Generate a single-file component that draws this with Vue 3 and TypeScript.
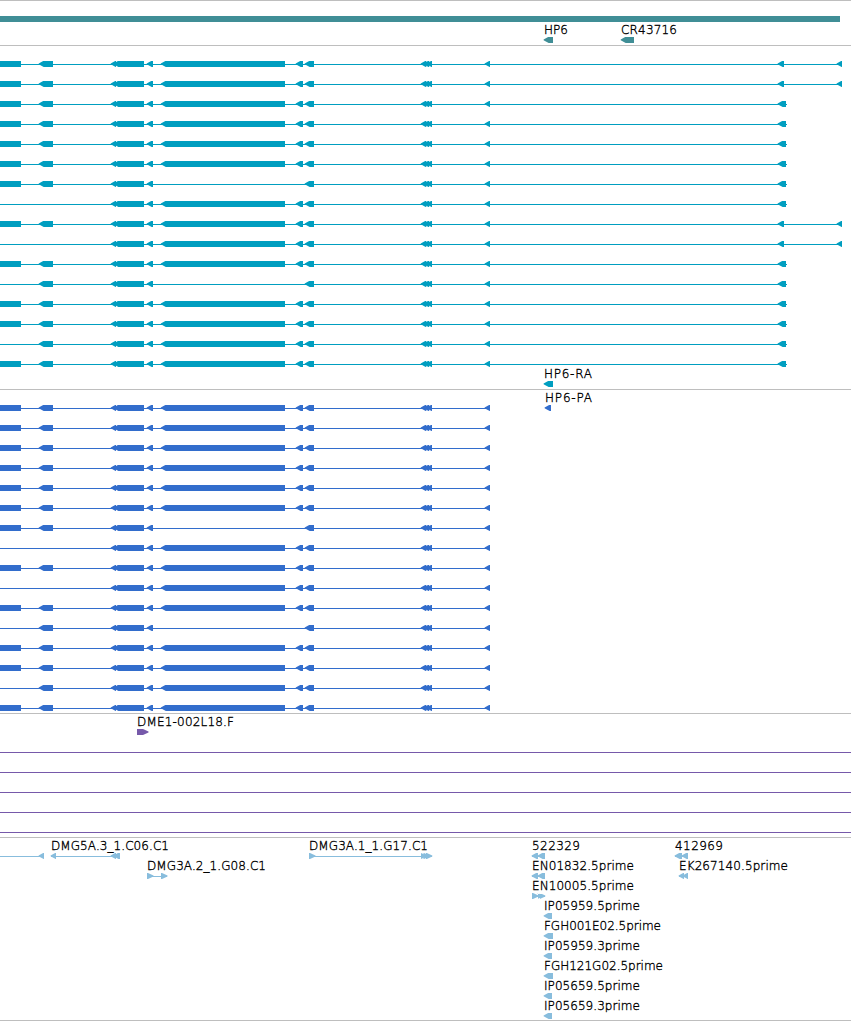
<script setup lang="ts">
type Direction = 'left' | 'right'

interface Block {
  start: number
  end: number
  dir?: Direction
}

interface Feature {
  y: number
  line?: [number, number]
  blocks: Block[]
}

interface Label {
  x: number
  y: number
  text: string
  width: number
}

interface Track {
  id: string
  height: number
  features: Feature[]
  labels: Label[]
}

const left = (start: number, end: number): Block => ({ start, end, dir: 'left' })
const right = (start: number, end: number): Block => ({ start, end, dir: 'right' })

// Outline of an exon; strand direction puts a pointed head on one side.
function outline(block: Block, y: number): string {
  const { start: a, end: b, dir } = block
  const head = Math.min(5, b - a)
  if (dir === 'left') return `M${a} ${y + 2.4}L${a + head - 0.5} ${y}H${b}V${y + 6}H${a + head}L${a} ${y + 3.2}Z`
  if (dir === 'right') return `M${a} ${y}H${b - head - 0.5}L${b} ${y + 2.6}V${y + 3.4}L${b - head - 0.5} ${y + 6}H${a}Z`
  return `M${a} ${y}H${b}V${y + 6}H${a}Z`
}

// Isoforms differ in which exons they keep: s = leading, b = second, e = long exon, p = far promoter.
const isoforms = ['sbep', 'sbep', 'sbe', 'sbe', 'sbe', 'sbe', 'sb', 'e', 'sbep', 'ep', 'sbe', 'b', 'sbe', 'sbe', 'be', 'sbe']

function isoformRows(top: number, coding: boolean): Feature[] {
  return isoforms.map((keys, i) => {
    const blocks: Block[] = []
    if (keys.includes('s')) blocks.push({ start: 0, end: 21 })
    if (keys.includes('b')) blocks.push(left(38.7, 53))
    blocks.push(left(110.7, 116), left(113.4, 144), left(146.7, 153))
    if (keys.includes('e')) blocks.push(left(160.8, 285), left(295.7, 303))
    blocks.push(left(304.7, 314), left(420.7, 426.3), left(423.5, 429.2), left(426.5, 432), left(484.6, 490))
    let end = 490
    if (!coding) {
      if (keys.includes('p')) {
        blocks.push(left(777.6, 784), left(836.6, 842))
        end = 842
      } else {
        blocks.push(left(777.6, 786))
        end = 787
      }
    }
    return { y: top + i * 20, line: [0, end], blocks }
  })
}

const label = (x: number, y: number, text: string, width: number): Label => ({ x, y, text, width })

const tracks: Track[] = [
  {
    id: 'gene',
    height: 45,
    features: [
      { y: 16, blocks: [{ start: 0, end: 840 }] },
      { y: 37, blocks: [left(543.6, 553), left(620.7, 634)] },
    ],
    labels: [label(544, 34, 'HP6', 24), label(621, 34, 'CR43716', 56)],
  },
  {
    id: 'transcript',
    height: 344,
    features: [...isoformRows(16, false), { y: 336, blocks: [left(543.6, 553)] }],
    labels: [label(544, 333, 'HP6-RA', 48)],
  },
  {
    id: 'protein',
    height: 324,
    features: [...isoformRows(16, true), { y: 16, blocks: [left(544.6, 551)] }],
    labels: [label(545, 13, 'HP6-PA', 47)],
  },
  {
    id: 'clone',
    height: 124,
    features: [
      { y: 16, blocks: [right(137, 148.5)] },
      ...[36, 56, 76, 96, 116].map((y): Feature => ({ y, line: [0, 851], blocks: [] })),
    ],
    labels: [label(137, 13, 'DME1-002L18.F', 97)],
  },
  {
    id: 'est',
    height: 183,
    features: [
      { y: 16, line: [0, 44], blocks: [left(38.6, 44)] },
      { y: 16, line: [51, 120], blocks: [left(50.6, 56), left(110.6, 116), left(113.4, 120)] },
      { y: 36, line: [147, 167], blocks: [right(147, 153.5), right(161, 167.5)] },
      { y: 16, line: [309, 432], blocks: [right(309, 315.5), right(421, 426.5), right(423.5, 429.5), right(426, 432.3)] },
      { y: 16, line: [532, 545], blocks: [left(531.6, 538), left(537.6, 545)] },
      { y: 36, line: [532, 545], blocks: [left(531.6, 538), left(537.6, 545)] },
      { y: 56, line: [532, 545], blocks: [right(532, 538.5), right(538, 543), right(540, 545.3)] },
      { y: 16, line: [675, 688], blocks: [left(674.6, 682), left(681.6, 688)] },
      { y: 36, line: [679, 688], blocks: [left(678.6, 684), left(682.6, 688)] },
      ...[552, 553, 552, 553, 552, 552].map((end, i): Feature => ({ y: 76 + i * 20, blocks: [left(543.6, end)] })),
    ],
    labels: [
      label(51, 13, 'DMG5A.3_1.C06.C1', 118),
      label(147, 33, 'DMG3A.2_1.G08.C1', 119),
      label(309, 13, 'DMG3A.1_1.G17.C1', 119),
      label(532, 13, '522329', 48),
      label(532, 33, 'EN01832.5prime', 102),
      label(532, 53, 'EN10005.5prime', 102),
      label(544, 73, 'IP05959.5prime', 96),
      label(544, 93, 'FGH001E02.5prime', 117),
      label(544, 113, 'IP05959.3prime', 96),
      label(544, 133, 'FGH121G02.5prime', 119),
      label(544, 153, 'IP05659.5prime', 96),
      label(544, 173, 'IP05659.3prime', 96),
      label(675, 13, '412969', 48),
      label(679, 33, 'EK267140.5prime', 109),
    ],
  },
]
</script>

<template>
  <main class="browser">
    <section v-for="track in tracks" :key="track.id" class="track" :class="track.id">
      <svg width="851" :height="track.height - 1" :viewBox="`0 1 851 ${track.height - 1}`">
        <g v-for="(feature, i) in track.features" :key="i">
          <rect
            v-if="feature.line"
            :x="feature.line[0]"
            :y="feature.y + 3"
            :width="feature.line[1] - feature.line[0]"
            height="1"
          />
          <path v-for="(block, j) in feature.blocks" :key="j" :d="outline(block, feature.y)" />
        </g>
        <text
          v-for="item in track.labels"
          :key="item.text"
          :x="item.x"
          :y="item.y"
          :textLength="item.width"
        >{{ item.text }}</text>
      </svg>
    </section>
  </main>
</template>

<style>
body {
  margin: 0;
  background: #fff;
}
</style>

<style scoped>
.browser {
  display: flex;
  flex-direction: column;
  width: 851px;
  height: 1021px;
  overflow: hidden;
  box-sizing: border-box;
  border-bottom: 1px solid #bebebe;
}

.track {
  flex: none;
  border-top: 1px solid #bebebe;
}

.track svg {
  display: block;
}

.gene {
  fill: #408e96;
}

.transcript {
  fill: #009ec0;
}

.protein {
  fill: #326dcc;
}

.clone {
  fill: #7659aa;
}

.est {
  fill: #88bddd;
}

text {
  fill: #000;
  font-family: 'DejaVu Sans Light', 'DejaVu Sans', sans-serif;
  font-size: 12px;
  font-weight: 200;
  stroke: #000;
  stroke-width: 0.35px;
}
</style>
